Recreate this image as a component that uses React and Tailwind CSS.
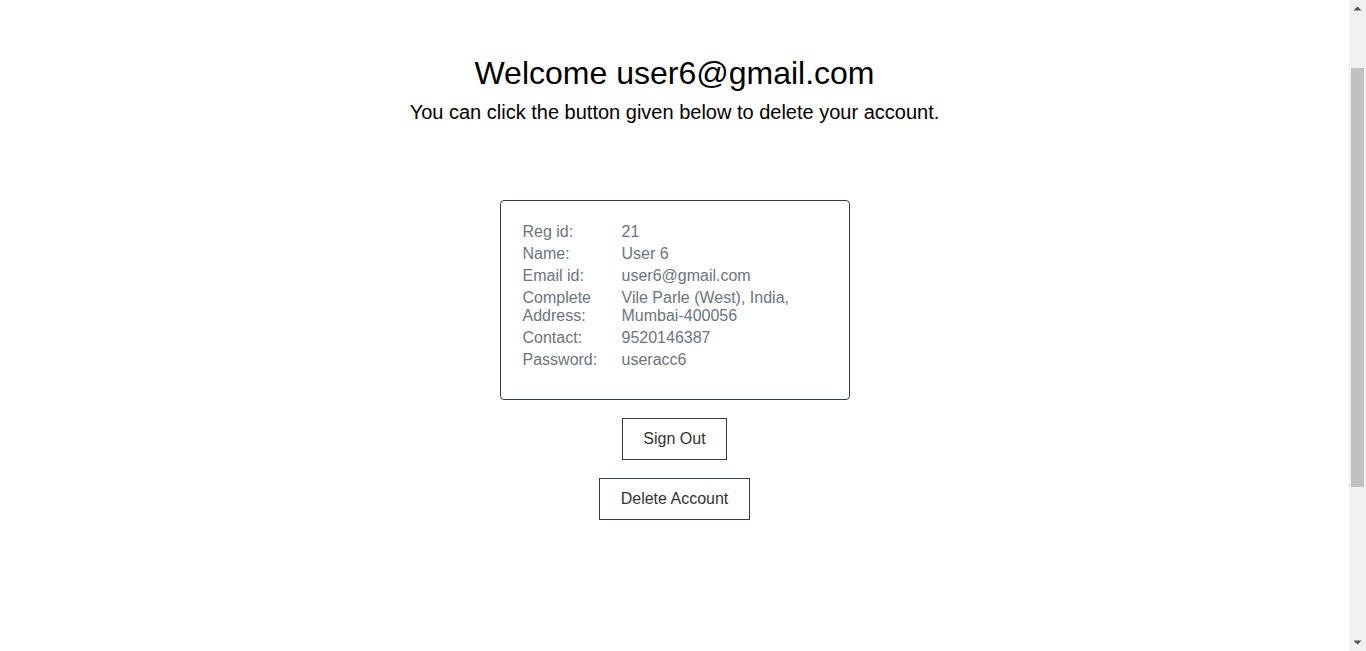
import React from "react";

const rows = [
  ["Reg id:", "21"],
  ["Name:", "User 6"],
  ["Email id:", "user6@gmail.com"],
  ["Complete Address:", "Vile Parle (West), India, Mumbai-400056"],
  ["Contact:", "9520146387"],
  ["Password:", "useracc6"],
];

function Scrollbar() {
  return (
    <div className="w-[17px] h-full shrink-0 bg-[#f1f1f1] flex flex-col">
      <div className="h-[17px] flex items-center justify-center">
        <svg width="9" height="5" viewBox="0 0 9 5">
          <path d="M0.5 4.5 L4.5 0.5 L8.5 4.5 Z" fill="#505050" />
        </svg>
      </div>
      <div className="flex-1 flex flex-col px-[2px]">
        <div className="h-[51px]" />
        <div className="h-[419px] bg-[#c1c1c1]" />
      </div>
      <div className="h-[17px] flex items-center justify-center">
        <svg width="9" height="5" viewBox="0 0 9 5">
          <path d="M0.5 0.5 L4.5 4.5 L8.5 0.5 Z" fill="#505050" />
        </svg>
      </div>
    </div>
  );
}

export default function App() {
  return (
    <div
      className="h-screen flex bg-white text-black overflow-hidden"
      style={{ fontFamily: '"Liberation Sans", Arial, sans-serif' }}
    >
      <div className="flex-1 flex flex-col items-center">
        <h1 className="mt-[55px] text-[32px] leading-[37px]">Welcome user6@gmail.com</h1>
        <p className="mt-[9px] text-[20px] leading-[23px]">
          You can click the button given below to delete your account.
        </p>

        <div className="mt-[76px] w-[350px] h-[200px] border border-[#343a40] rounded-[4px] pl-[22px] pt-[20px] text-[16px] leading-[18px] text-[#6c757d]">
          <div className="flex flex-col">
            {rows.map(([label, value]) => (
              <div key={label} className="flex py-[2px]">
                <div className="w-[99px] shrink-0 pr-2">{label}</div>
                <div className="w-[190px]">{value}</div>
              </div>
            ))}
          </div>
        </div>

        <button className="mt-[18px] h-[42px] w-[105px] border border-[#343a40] text-[16px] text-[#333] bg-white">
          Sign Out
        </button>
        <button className="mt-[18px] h-[42px] w-[151px] border border-[#343a40] text-[16px] text-[#333] bg-white">
          Delete Account
        </button>
      </div>
      <Scrollbar />
    </div>
  );
}
